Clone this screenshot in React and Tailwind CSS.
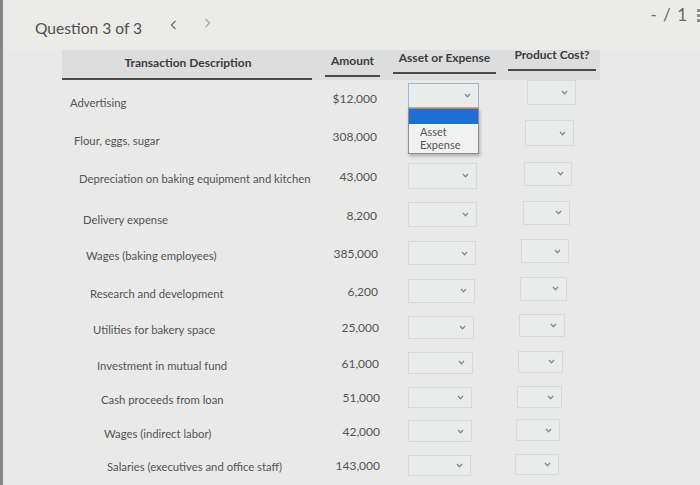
const rows = [
  { d: "Advertising", a: "$12,000", h: "h-[37px]", dpl: "pl-[8px]", dy: "translate-y-[4px]", apr: "pr-[3px]", bw: "w-[71px]", bh: "h-[25px]", by: "-translate-y-[3px]", ppl: "pl-[19px]", pw: "w-[49px]", ph: "h-[25px]", py: "-translate-y-[6px]", open: true },
  { d: "Flour, eggs, sugar", a: "308,000", h: "h-[40px]", dpl: "pl-[12px]", dy: "translate-y-[4px]", apr: "pr-[3px]", bw: "w-[71px]", bh: "h-[25px]", by: "-translate-y-[2px]", ppl: "pl-[17px]", pw: "w-[49px]", ph: "h-[26px]", py: "-translate-y-[4px]", hidden: true },
  { d: "Depreciation on baking equipment and kitchen", a: "43,000", h: "h-[39px]", dpl: "pl-[17px]", dy: "translate-y-[2px]", apr: "pr-[3px]", bw: "w-[69px]", bh: "h-[26px]", by: "-translate-y-[1px]", ppl: "pl-[16px]", pw: "w-[48px]", ph: "h-[24px]", py: "-translate-y-[3px]" },
  { d: "Delivery expense", a: "8,200", h: "h-[39px]", dpl: "pl-[21px]", dy: "translate-y-[4px]", apr: "pr-[3px]", bw: "w-[69px]", bh: "h-[25px]", by: "-translate-y-[1px]", ppl: "pl-[15px]", pw: "w-[47px]", ph: "h-[24px]", py: "-translate-y-[3px]" },
  { d: "Wages (baking employees)", a: "385,000", h: "h-[38px]", dpl: "pl-[24px]", dy: "translate-y-[2px]", apr: "pr-[2px]", bw: "w-[68px]", bh: "h-[24px]", by: "-translate-y-[1px]", ppl: "pl-[13px]", pw: "w-[48px]", ph: "h-[24px]", py: "-translate-y-[3px]" },
  { d: "Research and development", a: "6,200", h: "h-[37px]", dpl: "pl-[28px]", dy: "translate-y-[2px]", apr: "pr-[2px]", bw: "w-[67px]", bh: "h-[24px]", by: "-translate-y-[1px]", ppl: "pl-[12px]", pw: "w-[47px]", ph: "h-[24px]", py: "-translate-y-[3px]" },
  { d: "Utilities for bakery space", a: "25,000", h: "h-[36px]", dpl: "pl-[31px]", dy: "translate-y-[2px]", apr: "pr-[1px]", bw: "w-[66px]", bh: "h-[23px]", by: "-translate-y-[1px]", ppl: "pl-[11px]", pw: "w-[46px]", ph: "h-[23px]", py: "-translate-y-[3px]" },
  { d: "Investment in mutual fund", a: "61,000", h: "h-[35px]", dpl: "pl-[35px]", dy: "translate-y-[2px]", apr: "pr-[1px]", bw: "w-[65px]", bh: "h-[22px]", by: "-translate-y-[1px]", ppl: "pl-[10px]", pw: "w-[45px]", ph: "h-[22px]", py: "-translate-y-[2px]" },
  { d: "Cash proceeds from loan", a: "51,000", h: "h-[34px]", dpl: "pl-[39px]", dy: "translate-y-[2px]", apr: "pr-0", bw: "w-[64px]", bh: "h-[21px]", by: "-translate-y-[1px]", ppl: "pl-[9px]", pw: "w-[45px]", ph: "h-[22px]", py: "-translate-y-[1px]" },
  { d: "Wages (indirect labor)", a: "42,000", h: "h-[34px]", dpl: "pl-[42px]", dy: "translate-y-[2px]", apr: "pr-0", bw: "w-[64px]", bh: "h-[22px]", by: "-translate-y-[1px]", ppl: "pl-[8px]", pw: "w-[44px]", ph: "h-[22px]", py: "-translate-y-[2px]" },
  { d: "Salaries (executives and office staff)", a: "143,000", h: "h-[34px]", dpl: "pl-[45px]", dy: "translate-y-[1px]", apr: "pr-0", bw: "w-[63px]", bh: "h-[21px]", by: "-translate-y-[1px]", ppl: "pl-[7px]", pw: "w-[44px]", ph: "h-[21px]", py: "-translate-y-[2px]" },
];

function Chevron() {
  return (
    <svg width="7" height="5" viewBox="0 0 7 5" className="shrink-0">
      <polyline points="1,1 3.5,3.8 6,1" fill="none" stroke="#8a8a8a" strokeWidth="1.3" />
    </svg>
  );
}

function SelectBox({ w, h, focus }) {
  return (
    <div
      className={`${w} ${h} flex items-center justify-end pr-[7px] border ${
        focus ? "border-[#9db6d3]" : "border-[#d8dad9]"
      } bg-[#eaebeb]`}
    >
      <Chevron />
    </div>
  );
}

export default function App() {
  return (
    <div
      className="w-[700px] h-[485px] overflow-hidden flex bg-[#e8e9e8] text-[#555]"
      style={{ fontFamily: "Lato, 'Open Sans', sans-serif" }}
    >
      <div className="w-[3px] shrink-0 bg-[#858585]" />
      <div className="flex-1 flex flex-col">
        {/* top bar */}
        <div className="h-[50px] flex items-start bg-[#ebebea]">
          <div className="pl-[32px] pt-[18px] flex items-center">
            <span className="text-[15.6px] leading-[20px] text-[#4f4f4f]">Question 3 of 3</span>
            <span className="ml-[28px] -translate-y-[3px]">
              <svg width="7" height="10" viewBox="0 0 7 10">
                <polyline points="5.5,1 1.5,5 5.5,9" fill="none" stroke="#6a6a6a" strokeWidth="1.2" />
              </svg>
            </span>
            <span className="ml-[27px] -translate-y-[5px]">
              <svg width="7" height="10" viewBox="0 0 7 10">
                <polyline points="1.5,1 5.5,5 1.5,9" fill="none" stroke="#a8a8a8" strokeWidth="1.2" />
              </svg>
            </span>
          </div>
          <div className="flex-1" />
          <div className="pt-[4px] flex items-center">
            <span className="text-[17px] leading-[22px] text-[#6a6a6a] tracking-[1px]">- / 1</span>
            <div className="ml-[9px] flex flex-col gap-[2px]">
              <div className="w-[3px] h-[3px] bg-[#8c8c8c]" />
              <div className="w-[3px] h-[3px] bg-[#8c8c8c]" />
              <div className="w-[3px] h-[3px] bg-[#8c8c8c]" />
            </div>
          </div>
        </div>

        {/* header */}
        <div className="ml-[59px] w-[538px] h-[30px] bg-[#dcdddc] flex items-end font-bold text-[#3c3c3c] text-[12px] leading-[16px]">
          <div className="w-[250px] flex flex-col items-center">
            <span className="mb-[7px] translate-x-[1px]">Transaction Description</span>
            <div className="w-full h-[2px] bg-[#4a4a4a]" />
          </div>
          <div className="ml-[13px] w-[55px] flex flex-col items-center mb-[3px]">
            <span className="mb-[6px]">Amount</span>
            <div className="w-full h-[2px] bg-[#4a4a4a]" />
          </div>
          <div className="ml-[13px] w-[103px] flex flex-col items-center mb-[6px]">
            <span className="mb-[6px]">Asset or Expense</span>
            <div className="w-full h-[2px] bg-[#4a4a4a]" />
          </div>
          <div className="ml-[12px] w-[88px] flex flex-col items-center mb-[9px]">
            <span className="mb-[6px]">Product Cost?</span>
            <div className="w-full h-[2px] bg-[#4a4a4a]" />
          </div>
        </div>

        {/* rows */}
        <div className="flex flex-col">
          {rows.map((r) => (
            <div key={r.d} className={`${r.h} ml-[59px] flex items-center text-[12px] leading-[16px] text-[#545454]`}>
              <div className={`w-[250px] ${r.dpl} ${r.dy} text-[11.3px] whitespace-nowrap`}>{r.d}</div>
              <div className={`ml-[13px] w-[55px] text-right ${r.apr} whitespace-nowrap`}>{r.a}</div>
              <div className={`ml-[13px] w-[103px] pl-[15px] ${r.by} relative`}>
                {!r.hidden && <SelectBox w={r.bw} h={r.bh} focus={r.open} />}
                {r.open && (
                  <div className="absolute left-[15px] top-full w-[71px] z-10 border border-[#8f8f8f] bg-[#f1f1f1] shadow-[1px_2px_3px_rgba(0,0,0,0.25)]">
                    <div className="h-[15px] bg-[#1d6fd6]" />
                    <div className="pl-[11px] pt-[1px] pb-[2px] text-[11px] leading-[13px] text-[#555]">
                      <div>Asset</div>
                      <div>Expense</div>
                    </div>
                  </div>
                )}
              </div>
              <div className={`ml-[12px] w-[88px] ${r.ppl} ${r.py}`}>
                <SelectBox w={r.pw} h={r.ph} />
              </div>
            </div>
          ))}
        </div>
      </div>
    </div>
  );
}
